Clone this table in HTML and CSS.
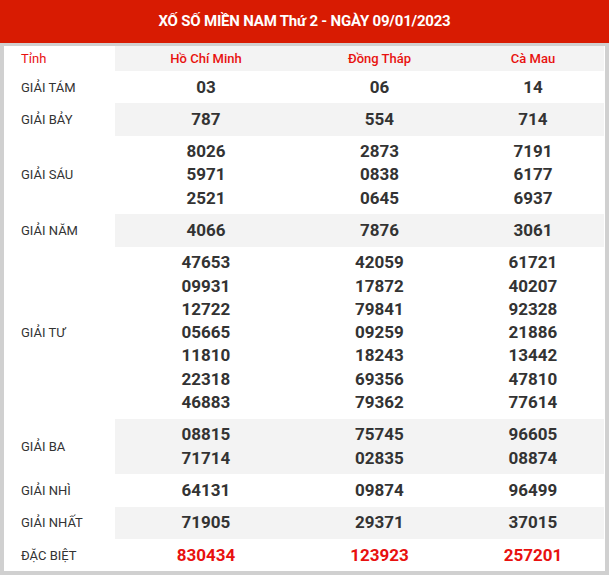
FILE: index.html
```html
<!DOCTYPE html>
<html lang="vi">
<head>
<meta charset="utf-8">
<title>XSMN</title>
<link rel="stylesheet" href="styles.css">
</head>
<body>
<div class="page">
  <div class="title">XỐ SỐ MIỀN NAM Thứ 2 - NGÀY 09/01/2023</div>
  <div class="box">
    <table class="kq">
      <colgroup><col class="c-label"><col class="c-1"><col class="c-2"><col class="c-3"></colgroup>
      <tr class="head">
        <td class="label tinh">Tỉnh</td><td class="prov">Hồ Chí Minh</td><td class="prov">Đồng Tháp</td><td class="prov">Cà Mau</td>
      </tr>
      <tr><td class="label">GIẢI TÁM</td><td>03</td><td>06</td><td>14</td></tr>
      <tr class="alt"><td class="label">GIẢI BẢY</td><td>787</td><td>554</td><td>714</td></tr>
      <tr><td class="label">GIẢI SÁU</td><td>8026<br>5971<br>2521</td><td>2873<br>0838<br>0645</td><td>7191<br>6177<br>6937</td></tr>
      <tr class="alt"><td class="label">GIẢI NĂM</td><td>4066</td><td>7876</td><td>3061</td></tr>
      <tr><td class="label">GIẢI TƯ</td><td>47653<br>09931<br>12722<br>05665<br>11810<br>22318<br>46883</td><td>42059<br>17872<br>79841<br>09259<br>18243<br>69356<br>79362</td><td>61721<br>40207<br>92328<br>21886<br>13442<br>47810<br>77614</td></tr>
      <tr class="alt"><td class="label">GIẢI BA</td><td>08815<br>71714</td><td>75745<br>02835</td><td>96605<br>08874</td></tr>
      <tr><td class="label">GIẢI NHÌ</td><td>64131</td><td>09874</td><td>96499</td></tr>
      <tr class="alt"><td class="label">GIẢI NHẤT</td><td>71905</td><td>29371</td><td>37015</td></tr>
      <tr class="db"><td class="label">ĐẶC BIỆT</td><td>830434</td><td>123923</td><td>257201</td></tr>
    </table>
  </div>
</div>
</body>
</html>
```
FILE: styles.css
```css
html, body { margin: 0; padding: 0; background: #fff; }
body { font-family: Roboto, "Liberation Sans", Arial, sans-serif; color: #333; }
.page { width: 609px; }
.title {
  background: #d81b02;
  color: #fff;
  font-weight: 700;
  font-size: 15px;
  height: 43px;
  line-height: 43px;
  text-align: center;
  letter-spacing: -0.2px;
}
.box {
  border: 4px solid #d0d0d0;
  border-top-width: 3px;
  padding: 0 1px 0 1px;
}
.kq { width: 100%; border-collapse: collapse; table-layout: fixed; }
.c-label { width: 110px; }
.c-1 { width: 182px; }
.c-2 { width: 165px; }
.c-3 { width: auto; }
.kq td {
  padding: 4.5px 0;
  line-height: 23.3px;
  text-align: center;
  font-size: 17px;
  font-weight: 700;
  color: #333;
}
.kq td.label {
  text-align: left;
  padding-left: 16px;
  font-size: 13px;
  font-weight: 400;
  color: #333;
}
.kq tr.head td { padding-top: 0; padding-bottom: 0; height: 25px; line-height: 25px; background: #f3f3f3; font-size: 13px; }
.kq tr.head td.label { background: #fff; padding-left: 16px; }
.kq td.prov { color: #e8110f; font-weight: 500; }
.kq td.tinh { color: #e8110f; }
.kq tr.alt td { background: #f3f3f3; }
.kq tr.alt td.label { background: #fff; }
.kq tr.db td { color: #e8110f; font-size: 17px; }
.kq tr.db td.label { color: #333; font-size: 13px; }
```
